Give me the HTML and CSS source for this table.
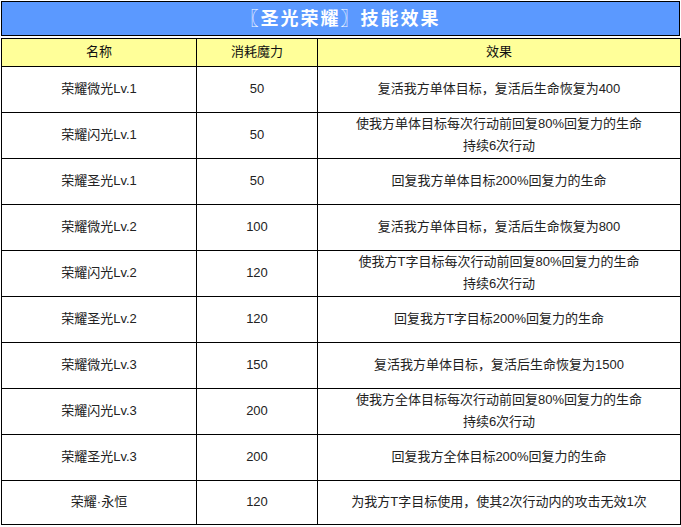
FILE: index.html
```html
<!DOCTYPE html>
<html lang="zh-CN">
<head>
<meta charset="utf-8">
<link rel="stylesheet" href="styles.css">
</head>
<body>
<div class="wrap">
  <div class="title">〖圣光荣耀〗技能效果</div>
  <table class="skills">
    <colgroup><col class="c1"><col class="c2"><col class="c3"></colgroup>
    <thead>
      <tr><th>名称</th><th>消耗魔力</th><th>效果</th></tr>
    </thead>
    <tbody>
      <tr><td>荣耀微光Lv.1</td><td>50</td><td>复活我方单体目标，复活后生命恢复为400</td></tr>
      <tr><td>荣耀闪光Lv.1</td><td>50</td><td>使我方单体目标每次行动前回复80%回复力的生命<br>持续6次行动</td></tr>
      <tr><td>荣耀圣光Lv.1</td><td>50</td><td>回复我方单体目标200%回复力的生命</td></tr>
      <tr><td>荣耀微光Lv.2</td><td>100</td><td>复活我方单体目标，复活后生命恢复为800</td></tr>
      <tr><td>荣耀闪光Lv.2</td><td>120</td><td>使我方T字目标每次行动前回复80%回复力的生命<br>持续6次行动</td></tr>
      <tr><td>荣耀圣光Lv.2</td><td>120</td><td>回复我方T字目标200%回复力的生命</td></tr>
      <tr><td>荣耀微光Lv.3</td><td>150</td><td>复活我方单体目标，复活后生命恢复为1500</td></tr>
      <tr><td>荣耀闪光Lv.3</td><td>200</td><td>使我方全体目标每次行动前回复80%回复力的生命<br>持续6次行动</td></tr>
      <tr><td>荣耀圣光Lv.3</td><td>200</td><td>回复我方全体目标200%回复力的生命</td></tr>
      <tr><td>荣耀·永恒</td><td>120</td><td>为我方T字目标使用，使其2次行动内的攻击无效1次</td></tr>
    </tbody>
  </table>
</div>
</body>
</html>
```

FILE: styles.css
```css
html, body {
  margin: 0;
  padding: 0;
  background: #ffffff;
}
body {
  font-family: "Liberation Sans", "Noto Sans CJK SC", sans-serif;
  font-size: 13px;
  color: #222;
}
.wrap {
  margin: 1px 0 0 1px;
  width: 679px;
}
.title {
  box-sizing: border-box;
  height: 35px;
  border: 1px solid #000;
  background: #5b99ff;
  color: #fff;
  font-family: "Noto Sans CJK SC", sans-serif;
  font-weight: bold;
  font-size: 18px;
  letter-spacing: 2px;
  text-align: center;
  line-height: 31px;
}
.skills {
  margin-top: 2px;
  width: 679px;
  border-collapse: collapse;
  table-layout: fixed;
}
.c1 { width: 195px; }
.c2 { width: 121px; }
.c3 { width: 363px; }
.skills th, .skills td {
  border: 1px solid #000;
  padding: 0 0 1px 0;
  text-align: center;
  vertical-align: middle;
  line-height: 22px;
}
.skills th {
  background: #ffff99;
  font-weight: normal;
  height: 26px;
  color: #111;
}
.skills td {
  height: 44px;
}
.skills tbody tr:last-child td {
  height: 42px;
}
```
